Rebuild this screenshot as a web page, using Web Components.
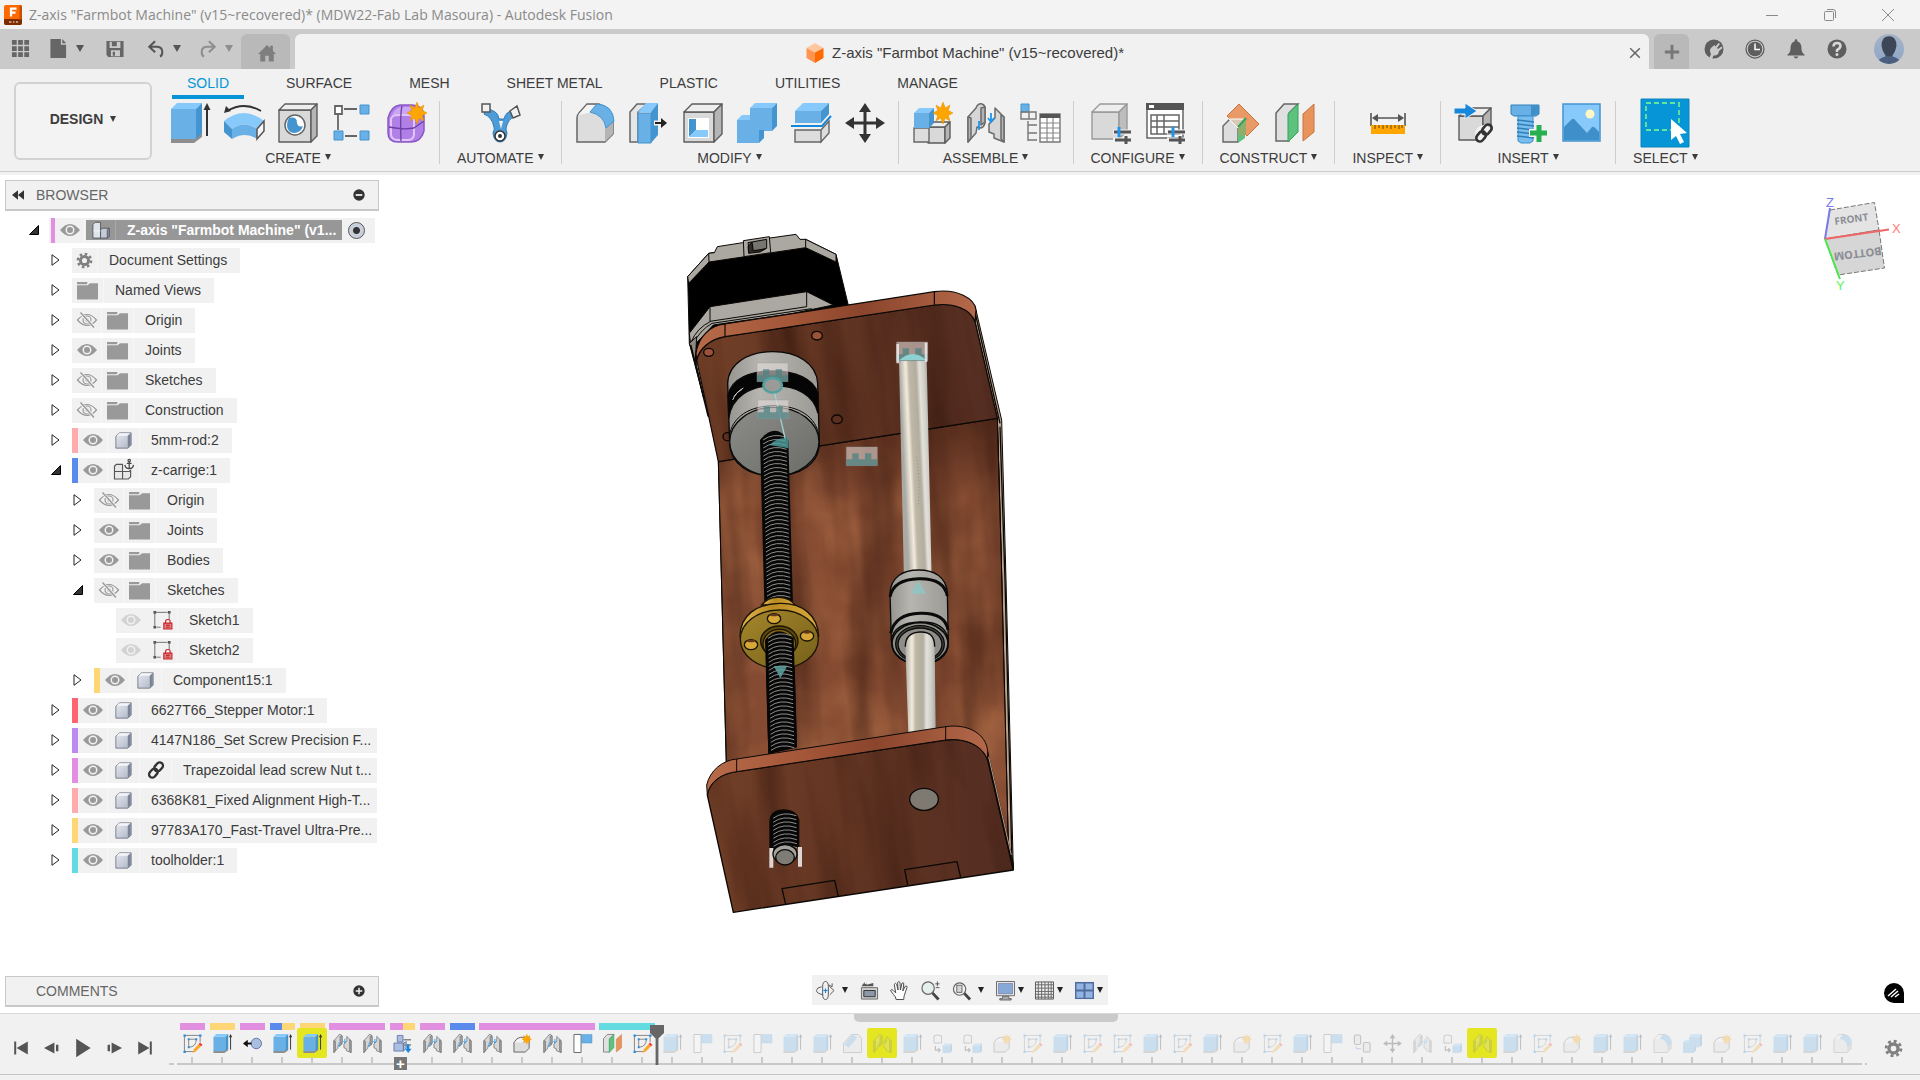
<!DOCTYPE html>
<html lang="en">
<head>
<meta charset="utf-8">
<title>Autodesk Fusion</title>
<style>
  html, body { margin: 0; height: 100%; overflow: hidden; }
  body { font: 14px/20px "Liberation Sans", Arial, sans-serif; color: #3c3c3c; background: #f1f1f1; }
</style>
</head>
<body>
<fusion-app></fusion-app>

<script>
// ---------------------------------------------------------------- icons
const STAR = (x, y) => `<path transform="translate(${x} ${y})" fill="#ffa500" stroke="#e08a00" stroke-width=".5" d="M0-11 2.3-5 7-8 5.3-2.6 10 0 5.3 2.6 7 8 2.3 5 0 11-2.3 5-7 8-5.3 2.6-10 0-5.3-2.6-7-8-2.3-5Z"/>`;
const BOX = (x, y, w, h, d, a = "#d9d9d9", b = "#eee", c = "#b5b5b5", s = "#5c5c5c") =>
  `<g stroke="${s}" stroke-width="1.4" stroke-linejoin="round"><path fill="${a}" d="M${x} ${y + d}h${w - d}v${h - d}h-${w - d}Z"/><path fill="${b}" d="M${x} ${y + d}l${d}-${d}h${w - d}l-${d} ${d}Z"/><path fill="${c}" d="M${x + w} ${y}v${h - d}l-${d} ${d}v-${h - d}Z"/></g>`;
const BLUE = (x, y, w, h, d) => BOX(x, y, w, h, d, "#68b0e6", "#88c9fb", "#4394cf", "none");
const SLIDERS = `<g stroke="#f1f1f1" stroke-width="5"><path d="M22 29h18M22 37h18"/></g><g stroke="#555" stroke-width="3"><path d="M23 29h17M24 37h16"/><path stroke="#1e96f0" d="M28 24v10"/><path d="M35 33v8"/></g>`;
const LINK = (x, y, k = 1) => `<g transform="translate(${x} ${y}) rotate(-50) scale(${k})" fill="none" stroke="#333" stroke-width="2.6"><rect x="-10" y="-3.6" width="11" height="7.2" rx="3.6"/><rect x="-1" y="-3.6" width="11" height="7.2" rx="3.6"/></g>`;
const JOINT = `<g fill="#d6d6d6" stroke="#6b6b6b" stroke-width="1.5" stroke-linejoin="round"><path d="M2 14 10 5q2-5 6-4 3 1 3 4v15q-1 4-4 5l-4-1-1 6-8 9Z"/><path fill="#b4b4b4" d="M2 14l3 1v20l-3 4ZM15 5v17l4-3V4Z"/><path d="M38 14 29 5v10l-6 6v8l5 2v4l10 4Z"/><path fill="#b4b4b4" d="M35 12v24l3 3V14Z"/></g><path fill="none" stroke="#1e96f0" stroke-width="1.8" d="M13 18v9M25 10v8m-3-3 3 4 3-4"/>`;
const GEAR = c => `<g fill="none" stroke="${c}"><circle cx="20" cy="20" r="9.5" stroke-width="7"/><circle cx="20" cy="20" r="15.5" stroke-width="6" stroke-dasharray="6.1 6.07"/></g>`;
const ROUND = `<path fill="#ddd" stroke="#666" stroke-width="1.5" d="M2 39V15Q2 12 4 10L12 1h12q8 2 14 18v12l-8 8Z"/><path fill="#b4b4b4" d="M30 39V24l8-7v14Z"/>`;

const ICONS = {
  app: `<rect x="2" y="0" width="36" height="40" rx="4" fill="#ff6a00"/><path fill="#7d2d00" d="M2 28h36v8q0 4-4 4H6q-4 0-4-4Z"/><path fill="#c64f00" d="M34 0q4 0 4 4v24l-5 2V0Z"/><path stroke="#fff" stroke-width="4.5" fill="none" d="M16 23V7h11M16 15h9"/><path stroke="#fff" stroke-width="2" d="M12 34h5M20 34h3M26 34h4"/>`,
  grid: `<path fill="#666" d="M2 2h10v10H2ZM15 2h10v10H15ZM28 2h10v10H28ZM2 15h10v10H2ZM15 15h10v10H15ZM28 15h10v10H28ZM2 28h10v10H2ZM15 28h10v10H15ZM28 28h10v10H28Z"/>`,
  file: `<path fill="#666" d="M3 0h22v12h11v28H3Z"/><path fill="#666" d="M28 0l8 9h-8Z"/>`,
  save: `<path fill="#666" d="M1 2h38v36H5l-4-5Z"/><path fill="#cacaca" d="M8 4h24v14H8ZM11 23h20v13H11Z"/><path fill="#666" d="M13 4h11v10H13ZM15 26h5v9h-5Z"/>`,
  undo: `<path fill="none" stroke="#555" stroke-width="4.5" d="M18 3 5 15l13 12M6 15h17q11 1 11 12 0 7-5 10"/>`,
  redo: `<path fill="none" stroke="#8e8e8e" stroke-width="4.5" d="M22 3l13 12-13 12M34 15H17Q6 16 6 27q0 7 5 10"/>`,
  home: `<path fill="#7e7e7e" d="M20 2 0 22h5v17h11V26h8v13h11V22h5l-7-7V4h-6v5Z"/>`,
  cube: `<path fill="#ffc7a0" d="M20 0 37 10 20 19 3 10Z"/><path fill="#ff9350" d="M3 10l17 9v21L3 30Z"/><path fill="#ff6a00" d="M37 10 20 19v21l17-10Z"/>`,
  close: `<path stroke="#666" stroke-width="5" d="M4 4 36 36M36 4 4 36"/>`,
  plus: `<path stroke="#777" stroke-width="7" d="M20 2v36M2 20h36"/>`,
  ext: `<circle cx="20" cy="20" r="19" fill="#5e5e5e"/><path fill="#cacaca" d="M10 40l4-10q-5-9 2-14l5-4 2 3 6-7 3 2-6 8 2 2 7-5 2 3-7 6q-1 10-11 9l-3 7Z"/>`,
  clock: `<circle cx="20" cy="20" r="18" fill="none" stroke="#5e5e5e" stroke-width="2.5"/><circle cx="20" cy="20" r="14.5" fill="#5e5e5e"/><path fill="none" stroke="#fff" stroke-width="3" d="M20 9v12h10"/>`,
  bell: `<path fill="#5e5e5e" d="M20 0q3 0 3 5 8 2 8 14 0 8 6 12v2H3v-2q6-4 6-12Q9 7 17 5q0-5 3-5ZM15 35h10q-5 8-10 0Z"/>`,
  help: `<circle cx="20" cy="20" r="19" fill="#5e5e5e"/><path fill="none" stroke="#d8d8d8" stroke-width="5" d="M13 15q0-7 7-7t7 6q0 4-7 8v4"/><circle cx="20" cy="31" r="3" fill="#d8d8d8"/>`,
  user: `<defs><linearGradient id="u" x2="0" y2="1"><stop stop-color="#a5b2c6"/><stop offset="1" stop-color="#8ea6c9"/></linearGradient><clipPath id="k"><circle cx="20" cy="20" r="20"/></clipPath></defs><g clip-path="url(#k)"><path fill="url(#u)" d="M0 0h40v40H0Z"/><path fill="#4c5f7f" d="M3 40q2-7 12-10v-5h10v5q10 3 12 10Z"/><path fill="#3d4656" d="M20 3q10 0 10 13-3 14-10 14T10 16Q10 3 20 3Z"/></g>`,

  extrude: `<path fill="#8e8e8e" d="M1 34h23l8-5v5l-8 6H1Z"/>` + BLUE(1, 0, 31, 36, 6) + `<path stroke="#333" stroke-width="2" d="M37 5v28"/><path fill="#333" d="M33.5 7 37 0l3.500 7Z"/>`,
  revolve: `<path fill="none" stroke="#333" stroke-width="2" d="M3 8Q20-2 37 8"/><path fill="#333" d="M0 10l2-7 5 5Z"/><path fill="#88c9fb" d="M0 18q20-16 40 0l-7 8q-13-9-25 0Z"/><path fill="#4394cf" d="M0 18l8 8v10l-8-7Z"/><path fill="#68b0e6" d="M8 26q12-9 25 0v10q-12-8-25 0Z"/><path fill="#f6f6f6" stroke="#555" stroke-width="1.500" d="M40 18l-7 8v10l7-8Z"/>`,
  hole: BOX(1, 1, 38, 38, 6) + `<circle cx="17" cy="22" r="10" fill="#fff" stroke="#666" stroke-width="1.500"/><path fill="#4394cf" d="M11 15q8-2 8 5 1 5 6 3-2 7-9 7-7-1-7-8 0-4 2-7Z"/>`,
  pattern: `<path stroke="#666" stroke-width="1.800" d="M12 6h13M6 12v15M13 33h12"/><path fill="#fff" stroke="#666" stroke-width="1.800" d="M3 3h7v8H3Z"/><path fill="#68b0e6" stroke="#4394cf" d="M28 2h9v9h-9ZM2 28h9v9H2ZM28 28h9v9h-9Z"/>`,
  form: `<path fill="#b180e6" stroke="#8a57c7" stroke-width="1.500" d="M2 15Q5 3 14 2h12q12 1 12 12v14q-3 11-13 11H12Q2 39 2 30Z"/><path fill="#cda5f5" d="M6 12q4-8 10-8h10l-3 7H12Z"/><path fill="none" stroke="#e0c5fb" stroke-width="2" d="M5 16q1-4 7-4h10q6 0 6 5v15q-1 5-6 5H12q-7 0-7-6Z"/><path stroke="#6d3ea6" stroke-width="1.300" fill="none" d="M16 3q-2 8-1 35M3 24q14 3 25 1l10-7"/>` + STAR(31, 10),
  automate: `<path fill="#4d9cd8" stroke="#2d78b4" d="M6 6q12 1 13 10h5q2-8 9-8l2 5q-7 3-9 12 0 3 1 5-1 9-7 9t-7-9q2-4 1-6Q12 14 4 11Z"/><path fill="#f1f1f1" stroke="#555" stroke-width="1.500" d="M2 1h8v8H2ZM30 8l7-5 3 9-7 3Z"/><circle cx="20" cy="33" r="5" fill="#fff" stroke="#333" stroke-width="1.500"/><circle cx="20" cy="33" r="2" fill="#333"/><path fill="#f1f1f1" d="M19 18h4l-2 8Z"/>`,
  fillet: ROUND + `<path fill="#f3f3f3" d="M3 12 12 2h8l-6 8Z"/><path fill="#68b0e6" stroke="#4394cf" d="M15 9 22 1q16 1 17 17l-8 7q-2-13-16-16Z"/>`,
  press: `<path fill="#e6e6e6" stroke="#666" stroke-width="1.500" d="M1 39V9l7-8h10L9 9v30Z"/><path fill="#68b0e6" stroke="#4394cf" d="M9 10h13v30H9Z"/><path fill="#88c9fb" d="M9 9l8-9h12l-7 9Z"/><path fill="#4394cf" d="M29 0v32l-7 8V9Z"/><path stroke="#f1f1f1" stroke-width="5" d="M25 20h10"/><path stroke="#222" stroke-width="2" d="M26 20h8"/><path fill="#222" d="M32 15l6 5-6 5Z"/>`,
  shell: BOX(1, 1, 38, 38, 8) + `<path fill="#fff" d="M5 15h21v20H5Z"/><path fill="#4394cf" d="M6 16h7v11l-7 7Z"/><path fill="#88c9fb" d="M13 27h12v7H6Z"/>`,
  combine: BLUE(13, 0, 27, 28, 5) + BLUE(0, 12, 27, 28, 5) + `<path fill="#68b0e6" d="M13 9h14v18H13Z"/>`,
  split: `<path fill="#68b0e6" d="M4 8h26v12H4Z"/><path fill="#88c9fb" d="M4 8l8-8h26l-8 8Z"/><path fill="#4394cf" d="M38 0v11l-8 9V8Z"/><path fill="none" stroke="#1587dd" stroke-width="2" d="M0 23h31l9-10"/><path fill="#ddd" stroke="#666" stroke-width="1.400" d="M4 27h26v12H4ZM30 27l8-9v12l-8 9Z"/>`,
  move: `<path stroke="#333" stroke-width="3" d="M20 5v30M5 20h30"/><path fill="#333" d="M20 0l6 9H14ZM20 40l6-9H14ZM0 20l9-6v12ZM40 20l-9-6v12Z"/>`,
  newcomp: BOX(16, 19, 22, 21, 5) + `<path fill="#ddd" stroke="#666" stroke-width="1.400" d="M2 25h15v14H2Z"/>` + BLUE(2, 5, 20, 20, 5) + STAR(31, 10),
  joint: JOINT,
  table: `<path fill="#68b0e6" stroke="#4394cf" d="M1 1h8v8H1Z"/><path fill="none" stroke="#777" stroke-width="1.400" d="M1 9h8v7H1ZM9 9h7v7H9ZM8 18v20M8 22h9M8 30h9M8 37h9"/><path fill="#fff" stroke="#777" stroke-width="1.400" d="M20 11h20v28H20Z"/><path fill="#555" d="M20 11h20v4H20Z"/><path stroke="#888" stroke-width="1.200" d="M20 20h20M20 25h20M20 30h20M20 35h20M27 15v24M33 15v24"/>`,
  config: BOX(1, 1, 35, 35, 8, "#d9d9d9", "#eee", "#bdbdbd", "#999") + SLIDERS,
  configtable: `<path fill="#fff" stroke="#666" stroke-width="1.500" d="M2 1h36v34H2Z"/><path fill="#555" d="M1 0h38v7H1Z"/><path fill="#fff" d="M4 2h5v3H4Z"/><path fill="none" stroke="#666" stroke-width="1.500" d="M6 12h28v19H6ZM6 18h28M6 24h28M12 12v19M19 12v19"/>` + SLIDERS,
  planecut: `<path fill="#ddd" stroke="#666" stroke-width="1.400" d="M2 39V23l7-7h17l-9 9v14Z"/><path fill="#5cc27e" d="M17 24l7-7v18l-7 5Z"/><path fill="#e8935c" fill-opacity=".93" stroke="#c8743c" d="M18 1 38 21 26 33 6 13Z"/><path fill="#d9c9b4" stroke="#fff" d="M8 16h17l-8 9Z"/><path fill="#8fae6a" d="M17 25l8-9v14l-4 4-4-5Z"/><path stroke="#35a25b" stroke-width="2" d="M17 24l8-9"/>`,
  plane: `<path fill="#e0e0e0" stroke="#666" stroke-width="1.500" d="M1 38V10l8-9h14l-9 9v28Z"/><path fill="#5cc27e" stroke="#35a25b" d="M13 11l10-10v28L13 39Z"/><path fill="#e8935c" stroke="#c8743c" d="M28 11 39 1v28L28 38Z"/>`,
  measure: `<path stroke="#555" stroke-width="1.600" d="M3 10v13M37 10v13M5 15h30"/><path fill="#555" d="M4 15l6-4v8ZM36 15l-6-4v8Z"/><path fill="#ffa500" d="M3 22h34v9H3Z"/><path stroke="#8a5a00" stroke-width="1.300" d="M7 22v4M11 22v3M15 22v4M19 22v3M23 22v4M27 22v3M31 22v4M34 22v3"/>`,
  derive: BOX(5, 5, 32, 32, 8) + `<path fill="#1587dd" stroke="#f1f1f1" d="M0 5h11V0l12 8-12 8v-5H0Z"/><circle cx="30" cy="31" r="9" fill="#f1f1f1"/>` + LINK(30, 30),
  bolt: `<path fill="#68b0e6" stroke="#2f7fb8" d="M3 2h28v9l-3 2H6l-3-2Z"/><path fill="#3f8fca" d="M23 2h8v9l-8 2Z"/><path fill="#79bdee" stroke="#3f8fca" d="M10 13h15v25l-3 2h-9l-3-2Z"/><path stroke="#2f7fb8" stroke-width="1.500" d="M9 17l17 2M9 21l17 2M9 25l17 2M9 29l17 2M9 33l17 2"/><path stroke="#f1f1f1" stroke-width="8" d="M31 20v20M21 30h19"/><path stroke="#27b04f" stroke-width="5" d="M31 22v17M22 30h17"/>`,
  image: `<path fill="#88c9fb" stroke="#4394cf" stroke-width="1.500" d="M1 1h37v37H1Z"/><path fill="#3f8fca" d="M2 24l8-8q2-1 4 2l11 12 5-6q2-1 7 5v8H2Z"/><circle cx="28" cy="11" r="4.500" fill="#fff8c4"/>`,
  select: `<path fill="#0696d7" stroke="#0a84bd" d="M-4-4h48v48H-4Z"/><path fill="none" stroke="#66e69a" stroke-width="1.800" stroke-dasharray="5 3" d="M1 0h33v27H1Z"/><path fill="#fff" d="M26 16v21l5-4 4 8 4-2-4-8 7-1Z"/>`,

  eye: `<path fill="#999" d="M0 20Q20-4 40 20 20 44 0 20Z"/><circle cx="20" cy="20" r="7.500" fill="none" stroke="#f1f1f1" stroke-width="3"/>`,
  eyeoff: `<path fill="none" stroke="#999" stroke-width="2.400" d="M1 20Q20-2 39 20 20 42 1 20Z"/><circle cx="20" cy="20" r="8" fill="none" stroke="#999" stroke-width="2.400"/><circle cx="20" cy="20" r="3.500" fill="#999"/><path stroke="#f1f1f1" stroke-width="6" d="M5 4 36 36"/><path stroke="#999" stroke-width="2.800" d="M7 5 34 35"/>`,
  gear: GEAR("#808080"),
  folder: `<path fill="#999" d="M0 10h20l5-4h15v31H0Z"/><path fill="#999" d="M0 4h17l3 0-1 4H0Z"/>`,
  body: `<defs><linearGradient id="b" x2="1" y2="1"><stop stop-color="#e6e9ef"/><stop offset="1" stop-color="#aeb6c6"/></linearGradient></defs><path fill="url(#b)" stroke="#6d7380" stroke-width="2" stroke-linejoin="round" d="M2 38V10l9-8h27v29l-8 7Z"/><path fill="#f5f6f9" d="M4 9l7-6h25l-7 6Z"/><path fill="#7b8496" d="M30 37V9l7-6v27Z"/>`,
  assembly: `<g stroke="#50545c" stroke-width="2" stroke-linejoin="round"><path fill="#dfe3ea" d="M2 8l5-5h12v35H2Z"/><path fill="#c4cad6" d="M19 20l4-4h15v18l-4 4H19Z"/><path fill="#9fa7b7" d="M34 20l4-4v18l-4 4Z"/></g><path stroke="#fff" stroke-width="1.500" d="M3 22h16"/>`,
  anchored: `<g fill="#e8e8e8" stroke="#555" stroke-width="2.400"><path d="M1 11l4-4h13v15H1ZM1 22h17v16H1ZM18 22h14l3-3v14l-5 5H18Z"/></g><path stroke="#f1f1f1" stroke-width="10" d="M32-3v21"/><g fill="none" stroke="#444" stroke-width="2.600"><circle cx="32" cy="-1" r="2.500"/><path d="M32 1v15M27 5h10M23 8q1 8 9 8t9-8"/></g>`,
  sketchlock: `<path fill="none" stroke="#666" stroke-width="2" d="M7 3h25M4 6v26M36 7v12M8 36h9"/><path fill="#555" d="M1 0h6v6H1ZM33 0h6v6h-6ZM1 33h6v6H1Z"/><path fill="#dc8080" stroke="#c9252b" stroke-width="2.500" d="M24 27h18v13H24Z"/><path fill="none" stroke="#c9252b" stroke-width="2.500" d="M28 27v-4q0-4 5-4t5 4v4M29 32h8M29 36h8"/>`,
  link: LINK(20, 20, 2),
  rewind: `<path fill="#333" d="M0 20 20 4v32ZM20 20 40 4v32Z"/>`,
  less: `<circle cx="20" cy="20" r="19" fill="#333"/><path stroke="#f1f1f1" stroke-width="6" d="M9 20h22"/>`,
  more: `<circle cx="20" cy="20" r="19" fill="#333"/><path stroke="#f1f1f1" stroke-width="5" d="M9 20h22M20 9v22"/>`,

  orbit: `<g fill="none" stroke="#555" stroke-width="2"><path d="M14 12q0-11 6-11t6 11v16q0 11-6 11t-6-11Z"/><path d="M12 12Q1 14 1 20t14 9M28 11l10 9-9 9"/><path d="M26 8l8 4v-7"/></g><path stroke="#1587dd" stroke-width="2.500" d="M20 16v9M15.500 20h9"/>`,
  look: `<path fill="#d0d0d0" stroke="#666" stroke-width="2" d="M3 14h34v24H3Z"/><path fill="#8c97a8" stroke="#333" stroke-width="2" d="M8 20h24v13H8Z"/><path fill="#555" d="M3 11l7-9v5l4-2v3l14-4v7Z"/>`,
  hand: `<path fill="#fff" stroke="#444" stroke-width="2" stroke-linejoin="round" d="M13 39q-1-6-6-11l-6-8q3-4 6 0l5 5L9 7q3-4 5 0l3 12-1-16q3-4 5 0l1 16 3-14q4-3 4 1l-2 15 5-10q4-2 4 2-3 8-6 18-1 3-1 8Z"/>`,
  zoom: `<path stroke="#444" stroke-width="6" d="M24 25 37 39"/><circle cx="15" cy="15" r="13" fill="#e4f0ec" stroke="#666" stroke-width="2.500"/><path stroke="#555" stroke-width="2" d="M30 6h9M34.500 1v10M31 14h8"/>`,
  zoomfit: `<path stroke="#444" stroke-width="6" d="M25 25 38 39"/><circle cx="16" cy="17" r="13" fill="#f4f4f4" stroke="#666" stroke-width="2.500"/><path fill="#d5d5d5" stroke="#666" stroke-width="2" d="M10 9h11v15H10Z"/>`,
  display: `<path fill="#aaa" stroke="#666" stroke-width="2" d="M14 32h13v5h5v3H8v-3h6Z"/><path fill="#eee" stroke="#666" stroke-width="2" d="M1 1h38v30H1Z"/><path fill="#86a9d8" stroke="#557" d="M5 5h30v22H5Z"/>`,
  gridset: `<path fill="#eee" stroke="#555" stroke-width="2" d="M1 2h38v36H1Z"/><path stroke="#666" stroke-width="2" d="M7 2v36M14 2v36M21 2v36M28 2v36M34 2v36M1 8h38M1 15h38M1 22h38M1 28h38M1 34h38"/>`,
  views: `<path fill="#4e6d9e" d="M0 2h40v36H0Z"/><path fill="#93b4e0" d="M3 5h15v13H3ZM22 5h15v13H22ZM3 22h15v13H3ZM22 22h15v13H22Z"/>`,

  first: `<path fill="#555" d="M3 4h5v32H3ZM37 4v32L9 20Z"/>`,
  back: `<path fill="#555" d="M26 6v28L0 20ZM30 12h6v16h-6Z"/>`,
  play: `<path fill="#555" d="M3-3 39 20 3 43Z"/>`,
  next: `<path fill="#555" d="M14 6v28l26-14ZM4 12h6v16H4Z"/>`,
  last: `<path fill="#555" d="M32 4h5v32h-5ZM3 4v32L31 20Z"/>`,
  sketch: `<g fill="none" stroke="#777" stroke-width="1.800"><path d="M4 3h32v14M3 4v33h18"/><path d="M12 11h16q0 16-16 17Z"/></g><path fill="#2a8fe0" d="M1 1h5v5H1ZM34 1h5v5h-5ZM1 35h5v5H1ZM10 9h4v4h-4ZM26 9h4v4h-4ZM10 26h4v4h-4Z"/><path fill="#f6a72c" d="M23 32l10-11 5 5-11 11-7 3Z"/><path fill="#e33" d="M33 21l3-3 5 5-3 3Z"/>`,
  origin: `<circle cx="28" cy="20" r="11" fill="#a9bfe2" stroke="#56699a" stroke-width="1.800"/><path stroke="#111" stroke-width="4" d="M7 20h11"/><path fill="#111" d="M0 20l10-8v16Z"/>`,
  imported: `<g stroke="#56699a" stroke-width="1.600" fill="#a9bfe2"><path d="M9 3h12v14H9ZM2 19h20v17H2Z"/><path d="M22 19l6-3v14l-6 6Z"/></g><path stroke="#888" stroke-width="3" d="M22 12h16M20 23h18"/><path stroke="#1587dd" stroke-width="5" d="M32 22v11"/><path fill="#1587dd" d="M25 31h14l-7 9Z"/>`,
  newbody: `<path fill="#ddd" stroke="#555" stroke-width="1.800" stroke-linejoin="round" d="M2 38V18Q8 7 16 7h18v23l-8 8Z"/><path fill="#f3f3f3" d="M4 18q5-9 13-9h8l-5 9Z"/>` + STAR(29, 11),
  rect: `<path fill="#fff" stroke="#666" stroke-width="2" d="M2 1h15v38H2Z"/><path fill="#68b0e6" stroke="#4394cf" d="M18 1h22v18H18Z"/>`,
  chamfer: `<path fill="#e2e2e2" stroke="#666" stroke-width="1.800" d="M1 39V20L18 1h14l7 8v30Z"/><path fill="#68b0e6" stroke="#4394cf" d="M3 22 20 2l9 6-17 20Z"/>`,
  copy: `<path fill="#eee" stroke="#666" stroke-width="2" d="M2 4q7-4 16 0v15H2Z"/><path fill="none" stroke="#444" stroke-width="2.500" d="M5 25v9h10m-4-4 4 4-4 4"/>` + BLUE(20, 20, 20, 20, 4),
  rigid: `<g fill="#ddd" stroke="#555" stroke-width="2.400"><rect x="3" y="2" width="13" height="20" rx="3"/><rect x="22" y="18" width="14" height="20" rx="3"/></g><path fill="none" stroke="#4760c8" stroke-width="2" d="M7 27v4h10"/>`,
};

class CadIcon extends HTMLElement {
  connectedCallback() {
    const s = this.getAttribute("size") || 20;
    this.attachShadow({ mode: "open" }).innerHTML = `
      <style>
        :host { display: inline-block; flex: none; width: ${s}px; height: ${s}px; }
        svg { display: block; width: 100%; height: 100%; overflow: visible; }
      </style>
      <svg viewBox="0 0 40 40" aria-hidden="true">${ICONS[this.getAttribute("name")] || ""}</svg>`;
  }
}
customElements.define("cad-icon", CadIcon);

const BTN = `button { font: inherit; color: inherit; background: none; border: 0; padding: 0; margin: 0; cursor: pointer; }
  .caret { display: inline-block; border: 4px solid transparent; border-top: 7px solid #3c3c3c; border-bottom: 0; }`;

// ---------------------------------------------------------------- title bar
class TitleBar extends HTMLElement {
  connectedCallback() {
    this.attachShadow({ mode: "open" }).innerHTML = `
      <style>
        ${BTN}
        :host { display: flex; align-items: center; height: 29px; background: #f3f3f3; color: #8a8a8a; padding: 0 3px; box-sizing: border-box; gap: 6px; }
        .text { flex: 1; font: 14px/20px "Open Sans", "Noto Sans", sans-serif; }
        button { width: 58px; height: 28px; display: grid; place-items: center; }
        .win { display: flex; }
        svg { fill: none; stroke: #8a8a8a; stroke-width: 1; }
      </style>
      <cad-icon name="app" size="20"></cad-icon>
      <div class="text"><slot></slot></div>
      <div class="win">
        <button aria-label="Minimize"><svg width="12" height="12"><path d="M0 6.500h12"/></svg></button>
        <button aria-label="Restore"><svg width="12" height="12"><rect x=".5" y="2.500" width="9" height="9" rx="1"/><path d="M3 .5h6q2.500 0 2.500 2.500v6"/></svg></button>
        <button aria-label="Close"><svg width="12" height="12"><path d="M0 0 12 12M12 0 0 12"/></svg></button>
      </div>`;
  }
}
customElements.define("title-bar", TitleBar);

// ---------------------------------------------------------------- tab bar
class DocumentBar extends HTMLElement {
  connectedCallback() {
    this.attachShadow({ mode: "open" }).innerHTML = `
      <style>
        ${BTN}
        :host { display: flex; align-items: stretch; height: 40px; background: #cacaca; padding-top: 5px; box-sizing: border-box; }
        button { display: grid; place-items: center; }
        .caret { border-top-color: #555; }
        .dim { border-top-color: #8e8e8e; }
        .quick { display: flex; align-items: center; width: 241px; box-sizing: border-box; padding: 0 8px 6px 11px; justify-content: space-between; }
        .quick button { display: flex; align-items: center; gap: 8px; }
        .quick button:nth-child(3) { margin: 0 4px; }
        .home { width: 49px; background: #b9b9b9; border-radius: 6px 6px 0 0; padding: 3px 0 0 3px; }
        .doc { flex: 1; display: flex; align-items: center; justify-content: center; gap: 7px; margin: 0 5px; background: #f1f1f1; border-radius: 6px 6px 0 0; font-size: 15px; padding: 2px 0 0 12px; }
        .doc .x { margin-right: 8px; width: 12px; }
        .pad { flex: 1; }
        .new { width: 35px; background: #b9b9b9; border-radius: 6px 6px 0 0; }
        .right { display: flex; align-items: center; gap: 21px; padding: 0 16px 6px 15px; }
        .right button:last-child { margin-left: 6px; }
      </style>
      <div class="quick">
        <button aria-label="Data panel"><cad-icon name="grid" size="19"></cad-icon></button>
        <button aria-label="File"><cad-icon name="file" size="19"></cad-icon><i class="caret"></i></button>
        <button aria-label="Save"><cad-icon name="save" size="18"></cad-icon></button>
        <button aria-label="Undo"><cad-icon name="undo" size="18"></cad-icon><i class="caret"></i></button>
        <button aria-label="Redo"><cad-icon name="redo" size="18"></cad-icon><i class="caret dim"></i></button>
      </div>
      <button class="home" aria-label="Home"><cad-icon name="home" size="18"></cad-icon></button>
      <div class="doc">
        <div class="pad"></div>
        <cad-icon name="cube" size="20"></cad-icon><span><slot></slot></span>
        <div class="pad"></div>
        <button class="x" aria-label="Close document"><cad-icon name="close" size="12"></cad-icon></button>
      </div>
      <button class="new" aria-label="New design"><cad-icon name="plus" size="16"></cad-icon></button>
      <div class="right">
        ${["ext", "clock", "bell", "help"].map(n => `<button aria-label="${n}"><cad-icon name="${n}" size="20"></cad-icon></button>`).join("")}
        <button aria-label="Account"><cad-icon name="user" size="30"></cad-icon></button>
      </div>`;
  }
}
customElements.define("document-bar", DocumentBar);

// ---------------------------------------------------------------- ribbon
class RibbonGroup extends HTMLElement {
  connectedCallback() {
    const icons = this.getAttribute("icons").split(" ");
    this.attachShadow({ mode: "open" }).innerHTML = `
      <style>
        ${BTN}
        :host { display: flex; flex-direction: column; align-items: center; height: 63px; border-right: 1px solid #cdcdcd; padding: 0 6px; }
        :host(:last-of-type) { border: 0; }
        .icons { display: flex; }
        .icons button { width: 54px; height: 44px; display: grid; place-items: center; }
        .label { padding: 0 11px; display: flex; align-items: center; gap: 4px; margin-top: 3px; }
        .caret { margin-top: -2px; border-width: 6px 3px 0; }
      </style>
      <div class="icons">${icons.map(n => `<button aria-label="${n}"><cad-icon name="${n}" size="40"></cad-icon></button>`).join("")}</div>
      <button class="label"><slot></slot><i class="caret"></i></button>`;
  }
}
customElements.define("ribbon-group", RibbonGroup);

class RibbonBar extends HTMLElement {
  connectedCallback() {
    const tabs = ["SOLID", "SURFACE", "MESH", "SHEET METAL", "PLASTIC", "UTILITIES", "MANAGE"];
    this.attachShadow({ mode: "open" }).innerHTML = `
      <style>
        ${BTN}
        :host { display: flex; height: 102px; background: #f1f1f1; border-bottom: 1px solid #cdcdcd; box-shadow: 0 3px 0 #f1f1f1; margin-bottom: 3px; }
        .design { width: 138px; height: 78px; margin: 13px 5px 0 14px; border: 2px solid #d2d2d2; border-radius: 6px; font-weight: bold; background: #f3f3f3; display: flex; align-items: center; justify-content: center; gap: 7px; flex: none; padding-bottom: 4px; }
        .caret { border-width: 6px 3px 0; }
        nav { display: flex; gap: 27px; padding: 3px 0 0 15px; }
        nav button { padding: 0 15px 2px; height: 27px; box-sizing: border-box; border-bottom: 4px solid transparent; }
        nav .on { color: #0696d7; border-color: #0696d7; }
        .groups { display: flex; margin-top: 2px; }
      </style>
      <button class="design">DESIGN <i class="caret"></i></button>
      <div>
        <nav>${tabs.map((t, i) => `<button class="${i ? "" : "on"}">${t}</button>`).join("")}</nav>
        <div class="groups">
          <ribbon-group icons="extrude revolve hole pattern form">CREATE</ribbon-group>
          <ribbon-group icons="automate">AUTOMATE</ribbon-group>
          <ribbon-group icons="fillet press shell combine split move">MODIFY</ribbon-group>
          <ribbon-group icons="newcomp joint table">ASSEMBLE</ribbon-group>
          <ribbon-group icons="config configtable">CONFIGURE</ribbon-group>
          <ribbon-group icons="planecut plane">CONSTRUCT</ribbon-group>
          <ribbon-group icons="measure">INSPECT</ribbon-group>
          <ribbon-group icons="derive bolt image">INSERT</ribbon-group>
          <ribbon-group icons="select">SELECT</ribbon-group>
        </div>
      </div>`;
  }
}
customElements.define("ribbon-bar", RibbonBar);

// ---------------------------------------------------------------- panels
class PanelHeader extends HTMLElement {
  connectedCallback() {
    const open = this.hasAttribute("open");
    this.attachShadow({ mode: "open" }).innerHTML = `
      <style>
        ${BTN}
        :host { display: flex; align-items: center; height: 31px; box-sizing: border-box; background: #f1f1f1; border: 1px solid #c8c8c8; border-bottom-width: 2px; color: #666; padding: 0 13px 0 6px; }
        .lead { width: 12px; margin-right: 12px; display: grid; }
        .name { flex: 1; }
        button { display: grid; }
      </style>
      <span class="lead">${open ? `<button aria-label="Collapse"><cad-icon name="rewind" size="12"></cad-icon></button>` : ""}</span>
      <span class="name"><slot></slot></span>
      <button aria-label="Toggle"><cad-icon name="${open ? "less" : "more"}" size="12"></cad-icon></button>`;
  }
}
customElements.define("panel-header", PanelHeader);

// One line of the browser tree. Attributes: level, open, leaf, eye, icon, link, color, long, root
class TreeRow extends HTMLElement {
  connectedCallback() {
    const a = n => this.getAttribute(n);
    const has = n => this.hasAttribute(n);
    const lvl = Number(a("level") || 0);
    const size = { folder: 21, gear: 17, body: 17, anchored: 19, sketchlock: 18, assembly: 18 }[a("icon")];
    this.attachShadow({ mode: "open" }).innerHTML = `
      <style>
        ${BTN}
        :host { display: flex; align-items: center; height: 30px; padding-left: ${46 + lvl * 22}px; }
        .exp { width: 21px; height: 20px; flex: none; display: grid; align-items: center; }
        .exp svg { display: block; }
        .box { display: flex; align-items: center; height: 25px; background: #f1f1f1; padding-right: 13px; flex: none; }
        :host([long]) .box { width: 305px; padding: 0; }
        .strip { width: 6px; align-self: stretch; background: ${a("color")}; flex: none; }
        .cell { width: 30px; height: 25px; display: grid; place-items: center; border-right: 1px solid #f7f7f7; box-sizing: border-box; flex: none; }
        .name { padding-left: 11px; white-space: nowrap; }
        .cell.icon { width: 32px; }
        .cell.gear { width: 26px; }
        .dim { opacity: .35; }
        :host([root]) .exp { width: 20px; }
        :host([root]) .strip { width: 4px; margin-left: 2px; }
        :host([root]) .box { padding-right: 10px; }
        .title { display: flex; align-items: center; width: 256px; height: 20px; background: #979797; color: #fff; font-weight: bold; margin: 0 6px 0 1px; }
        .title .cell { height: 20px; border-color: #a8a8a8; }
        input { appearance: none; width: 17px; height: 17px; margin: 0; border: 1px solid #555; border-radius: 50%; background: radial-gradient(#333 0 3px, #c9d0dc 4px); }
      </style>
      <span class="exp">${has("leaf") ? "" : has("open")
        ? `<button aria-label="Collapse"><svg width="10" height="10"><path fill="#333" stroke="#000" d="M9.500.5v9h-9Z"/></svg></button>`
        : `<button aria-label="Expand"><svg width="9" height="12"><path fill="#fff" stroke="#222" d="M1 .7 8 6 1 11.300Z"/></svg></button>`}</span>
      <div class="box">
        ${a("color") ? `<span class="strip"></span>` : ""}
        ${a("eye") ? `<button class="cell ${has("dim") ? "dim" : ""}" aria-label="Show or hide"><cad-icon name="${a("eye")}" size="20"></cad-icon></button>` : ""}
        ${has("root") ? `<span class="title"><span class="cell"><cad-icon name="assembly" size="18"></cad-icon></span><span class="name"><slot></slot></span></span>
          <input type="radio" checked aria-label="Activate component">` : `
          <span class="cell icon ${a("icon")}"><cad-icon name="${a("icon")}" size="${size}"></cad-icon></span>
          ${has("link") ? `<span class="cell icon"><cad-icon name="link" size="18"></cad-icon></span>` : ""}
          <span class="name"><slot></slot></span>`}
      </div>`;
  }
}
customElements.define("tree-row", TreeRow);

class BrowserPanel extends HTMLElement {
  connectedCallback() {
    this.attachShadow({ mode: "open" }).innerHTML = `
      <style>:host { display: block; } panel-header { margin-bottom: 4px; }</style>
      <panel-header open>BROWSER</panel-header>
      <tree-row root level="-1" open color="#e28fe2" eye="eye">Z-axis "Farmbot Machine" (v1...</tree-row>
      <tree-row icon="gear">Document Settings</tree-row>
      <tree-row icon="folder">Named Views</tree-row>
      <tree-row eye="eyeoff" icon="folder">Origin</tree-row>
      <tree-row eye="eye" icon="folder">Joints</tree-row>
      <tree-row eye="eyeoff" icon="folder">Sketches</tree-row>
      <tree-row eye="eyeoff" icon="folder">Construction</tree-row>
      <tree-row color="#ffaaad" eye="eye" icon="body">5mm-rod:2</tree-row>
      <tree-row open color="#5a8bec" eye="eye" icon="anchored">z-carrige:1</tree-row>
      <tree-row level="1" eye="eyeoff" icon="folder">Origin</tree-row>
      <tree-row level="1" eye="eye" icon="folder">Joints</tree-row>
      <tree-row level="1" eye="eye" icon="folder">Bodies</tree-row>
      <tree-row level="1" open eye="eyeoff" icon="folder">Sketches</tree-row>
      <tree-row level="2" leaf dim eye="eye" icon="sketchlock">Sketch1</tree-row>
      <tree-row level="2" leaf dim eye="eye" icon="sketchlock">Sketch2</tree-row>
      <tree-row level="1" color="#ffd676" eye="eye" icon="body">Component15:1</tree-row>
      <tree-row color="#ff6570" eye="eye" icon="body">6627T66_Stepper Motor:1</tree-row>
      <tree-row color="#bd8bf0" eye="eye" icon="body" long>4147N186_Set Screw Precision F...</tree-row>
      <tree-row color="#e28fe2" eye="eye" icon="body" link long>Trapezoidal lead screw Nut t...</tree-row>
      <tree-row color="#ffaaad" eye="eye" icon="body" long>6368K81_Fixed Alignment High-T...</tree-row>
      <tree-row color="#ffd676" eye="eye" icon="body" long>97783A170_Fast-Travel Ultra-Pre...</tree-row>
      <tree-row color="#62dce0" eye="eye" icon="body">toolholder:1</tree-row>`;
  }
}
customElements.define("browser-panel", BrowserPanel);

// ---------------------------------------------------------------- 3D model
class ModelView extends HTMLElement {
  // thread turns between two points of the screw axis
  threads(x1, y1, x2, y2, half, step) {
    let d = "";
    for (let y = y1; y < y2; y += step) {
      const x = x1 + (x2 - x1) * (y - y1) / (y2 - y1);
      d += `M${x - half + 8} ${y + 10}Q${x - 4} ${y - 12} ${x + half - 6} ${y + 2}`;
    }
    return `<path d="${d}" fill="none" stroke="#8f8f8c" stroke-width="3"/>`;
  }

  glyph(x, y) {
    return `<g transform="translate(${x} ${y})"><path fill="#e6dede" fill-opacity=".58" stroke="#999" stroke-opacity=".6" stroke-width="2" d="M0 0h93v56H0Z"/><path fill="#4d8380" fill-opacity=".75" d="M0 56V37h18V19h19v18h19V19h19v18h18v19Z"/></g>`;
  }

  connectedCallback() {
    const topPlate = "M110 450C118 415 150 388 195 380L823 285C880 278 930 295 945 335L1012 625 175 755Z";
    const topEdge = "M110 450 108 430C115 380 150 347 195 342L823 245C890 235 945 265 948 300L945 335C930 295 880 278 823 285L195 380C150 388 118 415 110 450Z";
    const back = "M175 755 1012 625 1024 1050 1045 1900 199 1660Z";
    const lowPlate = "M142 1755C148 1715 185 1690 230 1685L857 1590C920 1582 970 1610 983 1650L1060 1980 220 2107Z";
    const lowEdge = "M142 1755 140 1725C150 1680 190 1650 230 1647L857 1550C920 1540 980 1570 983 1625V1650C970 1610 920 1582 857 1590L230 1685C185 1690 148 1715 142 1755Z";
    this.attachShadow({ mode: "open" }).innerHTML = `
      <style>:host { display: block; width: 380px; height: 720px; } svg { display: block; width: 100%; height: 100%; }</style>
      <svg viewBox="0 0 1140 2160" role="img" aria-label="Z-axis assembly">
        <defs>
          <filter id="grain" x="0" y="0" width="1" height="1" color-interpolation-filters="sRGB">
            <feTurbulence type="fractalNoise" baseFrequency=".009 .0014" numOctaves="3" seed="4"/>
            <feColorMatrix values="0 0 0 0 .22  0 0 0 0 .1  0 0 0 0 .06  1.8 0 0 0 -.66"/>
          </filter>
          <filter id="glow" x="0" y="0" width="1" height="1" color-interpolation-filters="sRGB">
            <feTurbulence type="fractalNoise" baseFrequency=".006 .006" numOctaves="3" seed="11"/>
            <feColorMatrix values="0 0 0 0 .68  0 0 0 0 .43  0 0 0 0 .28  0 1.8 0 0 -.65"/>
          </filter>
          <clipPath id="cBack"><path d="${back}"/></clipPath>
          <clipPath id="cTop"><path d="${topPlate}"/></clipPath>
          <clipPath id="cLow"><path d="${lowPlate}"/></clipPath>
          <linearGradient id="shade" x2="0" y2="1"><stop stop-color="#35160d" stop-opacity=".6"/><stop offset=".2" stop-color="#35160d" stop-opacity="0"/></linearGradient>
          <linearGradient id="under" x2="1"><stop stop-color="#734028"/><stop offset=".5" stop-color="#603422"/><stop offset="1" stop-color="#542d22"/></linearGradient>
          <linearGradient id="edge" x2="1"><stop stop-color="#b86b49"/><stop offset=".35" stop-color="#a35638"/><stop offset=".6" stop-color="#8a452c"/><stop offset="1" stop-color="#b4694a"/></linearGradient>
          <linearGradient id="steel" gradientUnits="userSpaceOnUse" x1="717" y1="450" x2="802" y2="448"><stop stop-color="#aaa9a3"/><stop offset=".12" stop-color="#d3cfc4"/><stop offset=".22" stop-color="#f3ecdd"/><stop offset=".34" stop-color="#bfb8a8"/><stop offset=".58" stop-color="#b3ad9f"/><stop offset=".7" stop-color="#e3e1da"/><stop offset=".85" stop-color="#cfcec8"/><stop offset="1" stop-color="#a7aaa3"/></linearGradient>
          <linearGradient id="steelLow" x2="1"><stop stop-color="#aaa9a3"/><stop offset=".12" stop-color="#d3cfc4"/><stop offset=".22" stop-color="#f3ecdd"/><stop offset=".34" stop-color="#bfb8a8"/><stop offset=".58" stop-color="#b3ad9f"/><stop offset=".7" stop-color="#e3e1da"/><stop offset=".85" stop-color="#cfcec8"/><stop offset="1" stop-color="#a7aaa3"/></linearGradient>
          <linearGradient id="metal" x2="1"><stop stop-color="#95948f"/><stop offset=".35" stop-color="#b7b5af"/><stop offset="1" stop-color="#9b9a94"/></linearGradient>
          <linearGradient id="face" x2="1" y2="1"><stop stop-color="#8c8c89"/><stop offset="1" stop-color="#6b6b68"/></linearGradient>
          <linearGradient id="brass" x2="1"><stop stop-color="#e2b752"/><stop offset=".4" stop-color="#b98a22"/><stop offset="1" stop-color="#d9a93d"/></linearGradient>
          <linearGradient id="brassFace" x2="1" y2="1"><stop stop-color="#a5862b"/><stop offset="1" stop-color="#75601a"/></linearGradient>
        </defs>
        <g stroke="#0b0806" stroke-width="3" stroke-linejoin="round">
          <!-- stepper motor -->
          <path fill="#000" d="M83 200 146 130 437 88 528 133 566 290 110 460 88 400Z"/>
          <path fill="#aaa8a1" d="M83 200 146 130 163 128 172 110 248 98 330 84 408 73 420 88 437 88 528 133 528 156 437 113 147 156 86 220Z"/>
          <path fill="none" d="M146 130 147 156M437 88V113"/>
          <path fill="#aaa8a1" d="M250 92 328 80 332 128 252 140Z"/><path fill="#77756f" d="M264 98 320 88V115L268 128Z"/><path fill="#2b2a28" d="M264 110 276 96 280 122 316 117 300 126 266 130Z"/>
          <path fill="#aaa8a1" d="M88 370 150 290 440 245 520 285 400 310 160 345 108 400 92 405Z"/>
          <path fill="none" d="M150 290V334L440 290V245M94 395Q110 355 152 334M97 405Q120 360 156 340L455 296"/>
          <path fill="#8b8982" d="M88 400 110 380 106 450 130 560Z"/>
          <!-- back board -->
          <path fill="#bba28c" d="M948 300 1025 630 1038 1110 1060 1980 1040 1920 1024 1050 1012 625 945 335Z"/>
          <path fill="#844b32" d="${back}"/>
        </g>
        <g clip-path="url(#cBack)">
          <g transform="rotate(-4 600 1200)"><rect x="100" y="550" width="1000" height="1400" filter="url(#glow)" opacity=".7"/><rect x="100" y="550" width="1000" height="1400" filter="url(#grain)" opacity=".75"/></g>
          <path fill="url(#shade)" d="M175 625H1045V1900H175Z"/>
        </g>
        <g fill="none" stroke="#0b0806" stroke-width="3"><path d="${back}"/><path stroke-width="4" d="M1020 650 1035 1110 1056 1960M946 310 1020 640"/></g>
        <!-- top plate -->
        <path fill="url(#under)" d="${topPlate}"/>
        <g clip-path="url(#cTop)"><rect transform="rotate(-8 600 500)" x="0" y="150" width="1140" height="700" filter="url(#grain)" opacity=".8"/></g>
        <g stroke="#0b0806" stroke-width="3.500" stroke-linejoin="round">
          <path fill="none" d="${topPlate}M110 450 175 755"/>
          <path fill="none" stroke-width="5" d="M92 405 145 620"/>
          <path fill="url(#edge)" d="${topEdge}M195 342V380M823 245V285"/>
          <g fill="#9b5238" stroke-width="4"><ellipse cx="471" cy="377" rx="16" ry="13"/><ellipse cx="146" cy="427" rx="15" ry="12"/><ellipse cx="531" cy="628" rx="16" ry="13" fill="#5b2e20"/><ellipse cx="202" cy="680" rx="13" ry="12" fill="#5b2e20"/></g>
        </g>
        <!-- coupling -->
        <g stroke="#0a0a0a" stroke-width="4">
          <path fill="url(#metal)" d="M203 520C205 460 265 425 338 425S470 460 473 520L478 700C478 760 420 798 343 798S210 760 209 700Z"/>
          <path fill="#050505" d="M204 555C215 505 270 483 338 483S460 505 474 550V610C462 555 410 527 340 527S215 560 206 625Z"/>
          <path fill="none" stroke="#ccc" stroke-width="3" d="M218 570q8-22 32-36M222 560q8-14 24-22"/>
          <ellipse cx="343" cy="695" rx="134" ry="103" fill="url(#face)"/>
          <path fill="none" stroke-width="3" d="M208 680C215 620 270 587 343 587S470 620 477 680"/>
        </g>
        <!-- smooth rod, the sheen leans with its axis -->
        <path fill="url(#steel)" transform="translate(717 450) skewX(1.300) translate(-717 -450)" d="M717 450Q758 415 800 450V1110H717Z"/>
        <path stroke="#8b8678" stroke-width="2" stroke-dasharray="4 6" fill="none" d="M769 740q12 70 6 150"/>
        <!-- lead screw -->
        <path fill="#070707" d="M300 690Q345 635 385 690L411 1612 325 1632Z"/>
        ${this.threads(343, 680, 367, 1610, 42, 12)}
        <!-- brass nut -->
        <g stroke="#1a1404" stroke-width="4">
          <path fill="url(#brass)" d="M305 1185Q325 1160 358 1162T405 1185Z"/>
          <path fill="url(#brass)" d="M240 1280C240 1215 290 1182 358 1180S474 1215 476 1280Z"/>
          <ellipse cx="358" cy="1288" rx="117" ry="88" fill="url(#brassFace)"/>
          <ellipse cx="358" cy="1294" rx="56" ry="46" fill="#5d480c"/><ellipse cx="358" cy="1302" rx="49" ry="44" fill="#8c6a17"/>
          <g fill="#d7a838"><ellipse cx="342" cy="1226" rx="20" ry="15"/><ellipse cx="441" cy="1278" rx="20" ry="15"/><ellipse cx="273" cy="1304" rx="20" ry="15"/></g>
          <g fill="#66371f" stroke="none"><ellipse cx="342" cy="1215" rx="12" ry="4"/><ellipse cx="441" cy="1267" rx="12" ry="4"/><ellipse cx="273" cy="1293" rx="12" ry="4"/></g>
        </g>
        <path fill="#070707" d="M315 1290Q352 1240 401 1285L411 1612 325 1632Z"/>
        ${this.threads(358, 1275, 367, 1612, 42, 12)}
        <!-- linear bearing -->
        <g stroke="#0a0a0a" stroke-width="4">
          <path fill="url(#metal)" d="M690 1150C692 1100 730 1080 776 1080S860 1100 862 1150L865 1300C865 1340 830 1362 780 1362S695 1340 694 1290Z"/>
          <path fill="none" stroke-width="9" d="M690 1160Q700 1108 776 1106T862 1158M692 1270Q705 1212 780 1210T864 1260"/>
          <ellipse cx="780" cy="1300" rx="84" ry="62" fill="#8f8e89" stroke-width="5"/><ellipse cx="780" cy="1302" rx="73" ry="55" fill="#4b4b49"/><ellipse cx="780" cy="1303" rx="66" ry="49" fill="#8e8d88"/>
          <path fill="none" d="M694 1288Q705 1238 780 1236T865 1288"/>
        </g>
        <path fill="url(#steelLow)" d="M736 1310Q736 1268 780 1266T824 1310L827 1556 745 1568Z"/>
        <path fill="none" stroke="#0a0a0a" stroke-width="4" d="M736 1310Q736 1268 780 1266T824 1310"/>
        <path fill="#8fc5c3" fill-opacity=".9" d="M775 1112 798 1151H752Z"/><path fill="#5da3a3" fill-opacity=".85" d="M341 1368H382L361 1405Z"/>
        <!-- lower plate -->
        <path fill="#4f281c" stroke="#0b0806" stroke-width="3" d="M983 1625 1060 1960V1980L983 1670Z"/>
        <path fill="url(#under)" d="${lowPlate}"/>
        <g clip-path="url(#cLow)"><rect transform="rotate(-8 600 1850)" x="0" y="1500" width="1140" height="700" filter="url(#grain)" opacity=".7"/></g>
        <g fill="none" stroke="#0b0806" stroke-width="4" stroke-linejoin="round">
          <path d="${lowPlate}"/>
          <path fill="url(#edge)" stroke-width="3" d="${lowEdge}M230 1647V1685M857 1550V1590"/>
          <path d="M377 2083 366 2036 524 2011 535 2060M743 2025 734 1979 891 1955 902 2002M985 1650 1059 1975"/>
          <path stroke="#b59a85" stroke-width="3" d="M986 1640 1054 1935"/>
          <ellipse cx="792" cy="1768" rx="43" ry="33" fill="#7f7a71"/>
          <path fill="#070707" d="M330 1830Q335 1800 372 1800T416 1830V1910L330 1920Z"/>
        </g>
        ${this.threads(373, 1815, 375, 1915, 42, 12)}
        <path fill="#ddd5d2" d="M328 1914h12v59h-12ZM414 1911h12v59h-12Z"/>
        <g stroke="#0a0a0a" stroke-width="4"><ellipse cx="375" cy="1932" rx="36" ry="28" fill="#a4a39c"/><ellipse cx="375" cy="1942" rx="28" ry="23" fill="#7e7c75"/></g>
        <!-- joint glyphs -->
        <path stroke="#9fd3d2" stroke-width="4" d="M343 545 376 688"/><path fill="#4fa0a0" fill-opacity=".8" d="M328 705Q355 680 385 685V715Z"/>
        ${this.glyph(710, 396)}${this.glyph(291, 459)}${this.glyph(293, 570)}${this.glyph(559, 711)}
        <path fill="#8fd0d0" d="M719 450Q758 414 798 450Z"/><path fill="#efeaea" fill-opacity=".85" d="M709 402h8v58h-8ZM794 398h8v58h-8Z"/>
        <ellipse cx="338" cy="526" rx="28" ry="22" fill="#9a9a96" stroke="#4fa0a0" stroke-width="7"/>
      </svg>`;
  }
}
customElements.define("model-view", ModelView);

class ViewCube extends HTMLElement {
  connectedCallback() {
    this.attachShadow({ mode: "open" }).innerHTML = `
      <style>:host { display: block; } svg { display: block; } text { font: 13px "Liberation Sans", sans-serif; } .f { font: bold 10px "Open Sans", sans-serif; fill: #8a8d93; } .b { font-size: 11px; }</style>
      <svg width="100" height="110" viewBox="1810 190 100 110">
        <path fill="#e4e4e4" stroke="#777" stroke-dasharray="5 2" d="M1830 210 1874.500 202.500 1879 230 1825 239Z"/>
        <path fill="#d6d6d6" stroke="#777" stroke-dasharray="5 2" d="M1825 239 1879 230 1884.500 268 1838 275Z"/>
        <path stroke="#7a7aeb" stroke-width="2" d="M1825 239 1830 208"/>
        <path stroke="#e66" stroke-width="2" d="M1825 239 1889 229.500"/>
        <path stroke="#4ce64c" stroke-width="2" d="M1825 239 1840 279"/>
        <text x="1826" y="207" fill="#7a7aeb">Z</text>
        <text x="1892" y="233" fill="#ff7b7b">X</text>
        <text x="1836" y="290" fill="#5cf25c">Y</text>
        <text class="f" transform="translate(1835 225) rotate(-8)">FRONT</text>
        <text class="f b" transform="translate(1881 247) rotate(173)">BOTTOM</text>
      </svg>`;
  }
}
customElements.define("view-cube", ViewCube);

class NavBar extends HTMLElement {
  connectedCallback() {
    const items = [["orbit", 1], ["look"], ["hand"], ["zoom"], ["zoomfit", 1], ["display", 1], ["gridset", 1], ["views", 1]];
    this.attachShadow({ mode: "open" }).innerHTML = `
      <style>
        ${BTN}
        :host { display: flex; align-items: center; justify-content: space-between; width: 296px; height: 30px; box-sizing: border-box; padding: 0 5px 0 4px; background: #f1f1f1; }
        button { display: flex; align-items: center; gap: 7px; }
        .tight { gap: 3px; }
        .caret { border-width: 6px 3px 0; border-top-color: #222; }
      </style>
      ${items.map(([n, c], i) => `<button class="${i > 4 ? "tight" : ""}" aria-label="${n}"><cad-icon name="${n}" size="19"></cad-icon>${c ? `<i class="caret"></i>` : ""}</button>`).join("")}`;
  }
}
customElements.define("nav-bar", NavBar);

// ---------------------------------------------------------------- timeline
class TimeLine extends HTMLElement {
  connectedCallback() {
    const P = "#e28fe2", Y = "#ffd676", B = "#5a8bec", T = "#62dce0";
    // [icon, strip colours, strip joined to the next one]
    const done = [["sketch", P], ["extrude", Y], ["origin", P], ["extrude", B + " " + Y], ["extrude", Y], ["joint", P, 1], ["joint", P],
      ["imported", P + " " + Y], ["joint", P], ["joint", B], ["joint", P, 1], ["newbody", P, 1], ["joint", P, 1], ["rect", P], ["plane", T, 1], ["sketch", T]];
    const todo = `extrude rect sketch rect extrude extrude chamfer joint extrude copy copy newbody sketch extrude sketch sketch
      extrude sketch extrude newbody sketch extrude rect rigid move joint copy joint extrude sketch newbody extrude extrude
      fillet combine newbody sketch extrude extrude fillet`.split(/\s+/).map(n => [n]);
    const marked = [4, 23, 43];
    const items = [...done, ...todo].map(([icon, strip, join], i, all) => {
      const [c1, c2] = (strip || "").split(" ");
      const bg = strip ? `background:linear-gradient(90deg,${c1} 50%,${c2 || c1} 50%)` : "";
      const cls = `${i > 15 ? "off" : ""} ${marked.includes(i) ? "mark" : ""}`;
      return `<div class="item ${cls}"><span class="strip ${join ? "join" : ""} ${i && all[i - 1][2] ? "joined" : ""}" style="${bg}"></span>
        <button aria-label="${icon}"><cad-icon name="${icon}" size="19"></cad-icon></button><span class="tick"></span>
        ${i === 7 ? `<span class="group">+</span>` : ""}${i === 15 ? `<span class="head"></span>` : ""}</div>`;
    }).join("");
    this.attachShadow({ mode: "open" }).innerHTML = `
      <style>
        ${BTN}
        :host { display: flex; position: relative; height: 62px; box-sizing: border-box; background: #f1f1f1; border-top: 1px solid #d8d8d8; border-bottom: 1px solid #c4c4c4; }
        .player { display: flex; align-items: center; gap: 15px; padding: 8px 0 0 13px; width: 159px; box-sizing: border-box; flex: none; }
        .player button { display: grid; }
        .lane { flex: 1; display: flex; }
        .lane::before, .lane::after { content: ""; width: 18px; box-sizing: border-box; padding-top: 49px; height: 51px; background: repeating-linear-gradient(90deg, #c9c9c9 0 5px, transparent 5px 8px) content-box; flex: none; }
        .lane::before { padding-left: 10px; }
        .lane::after { width: 10px; }
        .item { position: relative; width: 30px; height: 51px; border-bottom: 2px solid #c9c9c9; box-sizing: border-box; display: flex; flex-direction: column; align-items: center; flex: none; }
        .strip { height: 7px; width: 25px; margin-top: 9px; flex: none; }
        .strip.join { width: 28px; margin-left: 2px; }
        .strip.joined { width: 28px; margin-right: 2px; }
        .strip.join.joined { width: 30px; margin: 9px 0 0; }
        .item button { width: 30px; height: 24px; margin-top: 1px; display: grid; place-items: center; flex: none; }
        .off cad-icon { opacity: .28; }
        .mark .strip { height: 5px; }
        .mark button { height: 30px; margin: 0 0 -3px; background: #e5e622; border-radius: 2px; }
        .tick { width: 2px; flex: 1; background: #c9c9c9; margin-top: 2px; }
        .group { position: absolute; top: 43px; left: 7px; width: 13px; height: 13px; background: #777; color: #fff; font: bold 15px/13px "Liberation Sans", sans-serif; text-align: center; }
        .head { position: absolute; top: 11px; right: -7px; width: 14px; height: 40px; background: #666; clip-path: polygon(0 0, 100% 0, 100% 20%, 60% 34%, 60% 100%, 40% 100%, 40% 34%, 0 20%); z-index: 1; }
        .thumb { position: absolute; top: 0; left: 854px; width: 264px; height: 8px; background: #cacaca; border-radius: 0 0 5px 5px; }
        .gear { width: 45px; display: grid; place-items: center; padding: 8px 9px 0 0; }
      </style>
      <div class="thumb"></div>
      <div class="player">${["first", "back", "play", "next", "last"].map(n => `<button aria-label="${n}"><cad-icon name="${n}" size="16"></cad-icon></button>`).join("")}</div>
      <div class="lane">${items}</div>
      <button class="gear" aria-label="Timeline settings"><cad-icon name="gear" size="19"></cad-icon></button>`;
  }
}
customElements.define("time-line", TimeLine);

// ---------------------------------------------------------------- application
class FusionApp extends HTMLElement {
  connectedCallback() {
    this.attachShadow({ mode: "open" }).innerHTML = `
      <style>
        :host { display: flex; flex-direction: column; height: 100vh; }
        main { position: relative; flex: 1; background: #fff; display: flex; min-height: 0; }
        aside { width: 374px; padding: 5px 5px 6px; display: flex; flex-direction: column; justify-content: space-between; }
        model-view { position: absolute; left: 660px; top: 35px; }
        view-cube { position: absolute; right: 10px; top: 15px; }
        nav-bar { position: absolute; left: 50%; bottom: 8px; transform: translateX(-50%); }
        .assist { position: absolute; right: 16px; bottom: 10px; width: 20px; height: 20px; padding: 0; border: 0; background: #000; border-radius: 10px 10px 0 10px; }
        footer { height: 5px; background: #f1f1f1; }
      </style>
      <title-bar>Z-axis "Farmbot Machine" (v15~recovered)* (MDW22-Fab Lab Masoura) - Autodesk Fusion</title-bar>
      <document-bar>Z-axis "Farmbot Machine" (v15~recovered)*</document-bar>
      <ribbon-bar></ribbon-bar>
      <main>
        <aside>
          <browser-panel></browser-panel>
          <panel-header>COMMENTS</panel-header>
        </aside>
        <model-view></model-view>
        <view-cube></view-cube>
        <nav-bar></nav-bar>
        <button class="assist" aria-label="Assistant"><svg width="20" height="20" fill="none" stroke="#fff" stroke-width="1.500"><path d="M4 13 12 6M7 14 14 8M11 14l4-3"/></svg></button>
      </main>
      <time-line></time-line>
      <footer></footer>`;
  }
}
customElements.define("fusion-app", FusionApp);
</script>
</body>
</html>
